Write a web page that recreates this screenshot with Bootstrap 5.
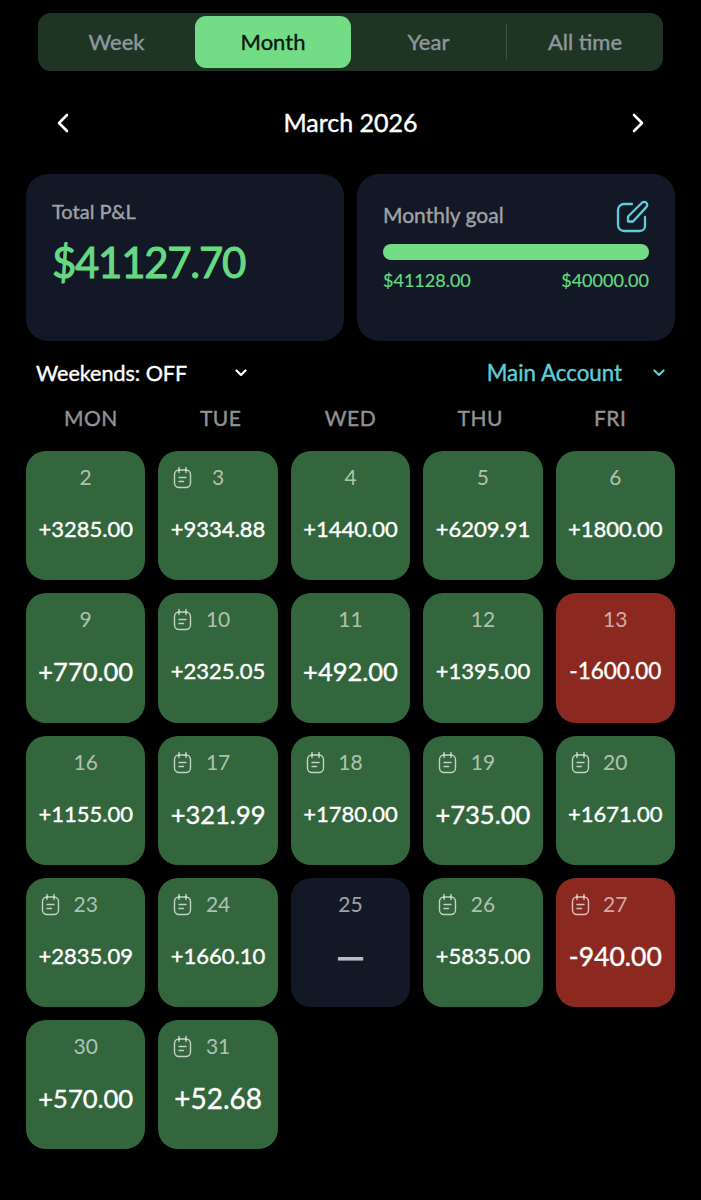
<!DOCTYPE html>
<html lang="en">
  <head>
    <meta charset="UTF-8" />
    <meta name="viewport" content="width=device-width, initial-scale=1.0" />
    <title>P&amp;L Calendar</title>
    <link href="https://cdn.jsdelivr.net/npm/bootstrap@5.3.3/dist/css/bootstrap.min.css" rel="stylesheet" />
    <style>
      body {
        background: #000;
        font-family: "Lato", "Liberation Sans", sans-serif;
        color: #fff;
      }
      .app-page {
        width: 701px;
        height: 1200px;
        padding: 13px 26px 0;
        overflow: hidden;
      }
      /* Lato has no medium here, so thicken the regular a little */
      .period-item,
      .month-title,
      .sum-label,
      .filter-row,
      .week-head,
      .day-val {
        -webkit-text-stroke: 0.4px currentColor;
      }
      /* period switch */
      .period-bar {
        margin: 0 12px;
        height: 58px;
        padding: 3px 0;
        background: #1f3524;
        border-radius: 13px;
      }
      .period-item {
        width: 155px;
        flex: 0 0 auto;
        background: none;
        border: 0;
        border-radius: 11px;
        color: #8f979f;
        font-size: 22px;
        padding: 0 0 2px;
      }
      .period-item.is-on {
        background: #72dd86;
        color: #0b1a0f;
        width: 156px;
      }
      .period-item.is-last {
        border-radius: 0;
        height: 36px;
        width: 157px;
        align-self: center;
        border-left: 1px solid #3d5243;
      }
      .first-gap {
        width: 157px;
      }
      /* month header */
      .month-row {
        height: 46px;
        margin: 29px 0 28px;
        padding: 0 30px;
      }
      .month-title {
        font-size: 25px;
      }
      /* summary cards */
      .sum-wrap {
        gap: 13px;
      }
      .sum-card {
        flex: 1 1 0;
        height: 167px;
        background: #121826;
        border-radius: 22px;
        padding: 26px 26px 0;
      }
      .sum-label {
        color: #a1a1a6;
        font-size: 20px;
        line-height: 24px;
        margin-top: -1px;
      }
      .goal-label {
        font-size: 21px;
        margin-top: 0;
        margin-bottom: 3px;
      }
      .sum-total {
        color: #66d981;
        font-size: 42px;
        -webkit-text-stroke: 1px currentColor;
        letter-spacing: -1.300px;
        line-height: 56px;
        margin-top: 11px;
      }
      .goal-track {
        height: 16px;
        background: #72dd86;
        border-radius: 8px;
        margin-top: 11px;
      }
      .goal-nums {
        color: #66d981;
        font-size: 18px;
        -webkit-text-stroke: 0.2px currentColor;
        line-height: 24px;
        margin-top: 8px;
      }
      /* filters */
      .filter-row {
        height: 32px;
        margin-top: 16px;
        padding: 0 10px;
        font-size: 21.500px;
      }
      .weekend-gap {
        gap: 48px;
      }
      .account-gap {
        gap: 31px;
        font-size: 22.300px;
      }
      .teal-text {
        color: #5fcdd9;
      }
      /* calendar */
      .day-grid {
        display: grid;
        grid-template-columns: repeat(5, 1fr);
        gap: 13px;
      }
      .week-head {
        display: flex;
        margin: 12px 0 16px;
        height: 34px;
        color: #929296;
        font-size: 21px;
        letter-spacing: 0.5px;
        line-height: 34px;
        text-align: center;
      }
      .week-head div {
        width: 130px;
      }
      .day-cell {
        position: relative;
        height: 129.250px;
        border-radius: 20px;
        text-align: center;
      }
      .cell-win {
        background: #33663c;
      }
      .cell-loss {
        background: #8b2921;
      }
      .cell-none {
        background: #121826;
      }
      .day-num {
        padding-top: 13px;
        font-size: 21px;
        line-height: 26px;
        color: rgba(255, 255, 255, 0.62);
      }
      .day-note {
        position: absolute;
        left: 15px;
        top: 15px;
        width: 19px;
        height: 23px;
        color: rgba(255, 255, 255, 0.7);
      }
      .day-val {
        margin-top: 24px;
        height: 30px;
        line-height: 30px;
        font-size: 22px;
        white-space: nowrap;
      }
      .val-neg {
        font-size: 22.500px;
      }
      .val-mid {
        font-size: 25.500px;
      }
      .val-wide {
        font-size: 26.500px;
      }
      .val-big {
        font-size: 28px;
      }
      .val-dash {
        color: #b9bcc6;
        font-size: 36px;
        -webkit-text-stroke: 1.200px currentColor;
      }
      .note-ghost {
        display: none;
      }
    </style>
  </head>

  <body>
    <svg class="note-ghost">
      <symbol id="note" viewBox="0 0 19 23">
        <g fill="none" stroke="currentColor" stroke-width="1.400" stroke-linecap="round">
          <rect x="1.500" y="4" width="16" height="17.500" rx="4.500" />
          <path d="M6 1.500v5M13 1.500v5M6 11.500h7M6 15.500h4.500" />
        </g>
      </symbol>
    </svg>

    <div class="app-page">
      <div class="period-bar d-flex">
        <button class="period-item first-gap">Week</button>
        <button class="period-item is-on">Month</button>
        <button class="period-item">Year</button>
        <button class="period-item is-last">All time</button>
      </div>

      <div class="month-row d-flex align-items-center justify-content-between">
        <svg width="14" height="20" viewBox="0 0 14 20"><path d="M11 2 3 10l8 8" fill="none" stroke="#fff" stroke-width="2.600" stroke-linecap="round" stroke-linejoin="round" /></svg>
        <div class="month-title">March 2026</div>
        <svg width="14" height="20" viewBox="0 0 14 20"><path d="m3 2 8 8-8 8" fill="none" stroke="#fff" stroke-width="2.600" stroke-linecap="round" stroke-linejoin="round" /></svg>
      </div>

      <div class="d-flex sum-wrap">
        <div class="sum-card">
          <div class="sum-label">Total P&amp;L</div>
          <div class="sum-total">$41127.70</div>
        </div>
        <div class="sum-card">
          <div class="d-flex justify-content-between align-items-center">
            <div class="sum-label goal-label">Monthly goal</div>
            <svg class="teal-text d-block" width="33" height="33" viewBox="0 0 33 33">
              <g fill="none" stroke="currentColor" stroke-width="2.300" stroke-linecap="round" stroke-linejoin="round">
                <path d="M16 4H8a6 6 0 0 0-6 6v15a6 6 0 0 0 6 6h16a5 5 0 0 0 5-5v-9" />
                <path d="M12 21.500v-5L26 2.800a3 3 0 0 1 4.300 0 3 3 0 0 1 0 4.300L17 21.500z" />
              </g>
            </svg>
          </div>
          <div class="goal-track"></div>
          <div class="goal-nums d-flex justify-content-between">
            <span>$41128.00</span>
            <span>$40000.00</span>
          </div>
        </div>
      </div>

      <div class="filter-row d-flex justify-content-between align-items-center">
        <div class="d-flex align-items-center weekend-gap">
          <span>Weekends: OFF</span>
          <svg width="12" height="8" viewBox="0 0 12 8"><path d="m1.500 1.500 4.500 4.500 4.500-4.500" fill="none" stroke="#fff" stroke-width="2.200" stroke-linecap="round" stroke-linejoin="round" /></svg>
        </div>
        <div class="d-flex align-items-center account-gap teal-text">
          <span>Main Account</span>
          <svg width="12" height="8" viewBox="0 0 12 8"><path d="m1.500 1.500 4.500 4.500 4.500-4.500" fill="none" stroke="#5fcdd9" stroke-width="2.200" stroke-linecap="round" stroke-linejoin="round" /></svg>
        </div>
      </div>

      <div class="week-head">
        <div>MON</div><div>TUE</div><div>WED</div><div>THU</div><div>FRI</div>
      </div>

      <div class="day-grid" id="days"></div>
    </div>

    <script src="https://cdn.jsdelivr.net/npm/bootstrap@5.3.3/dist/js/bootstrap.bundle.min.js"></script>
    <script>
      // day, value, has note, size class
      const days = [
        [2, "+3285.00", 0, ""], [3, "+9334.88", 1, ""], [4, "+1440.00", 0, ""], [5, "+6209.91", 0, ""], [6, "+1800.00", 0, ""],
        [9, "+770.00", 0, "val-mid"], [10, "+2325.05", 1, ""], [11, "+492.00", 0, "val-mid"], [12, "+1395.00", 0, ""], [13, "-1600.00", 0, "val-neg"],
        [16, "+1155.00", 0, ""], [17, "+321.99", 1, "val-mid"], [18, "+1780.00", 1, ""], [19, "+735.00", 1, "val-mid"], [20, "+1671.00", 1, ""],
        [23, "+2835.09", 1, ""], [24, "+1660.10", 1, ""], [25, "—", 0, "val-dash"], [26, "+5835.00", 1, ""], [27, "-940.00", 1, "val-wide"],
        [30, "+570.00", 0, "val-mid"], [31, "+52.68", 1, "val-big"],
      ];
      const note = '<svg class="day-note"><use href="#note" /></svg>';
      document.getElementById("days").innerHTML = days
        .map(([d, v, n, cls]) => {
          const kind = v === "—" ? "cell-none" : v[0] === "-" ? "cell-loss" : "cell-win";
          return `<div class="day-cell ${kind}">${n ? note : ""}<div class="day-num">${d}</div><div class="day-val ${cls}">${v}</div></div>`;
        })
        .join("");
    </script>
  </body>
</html>
